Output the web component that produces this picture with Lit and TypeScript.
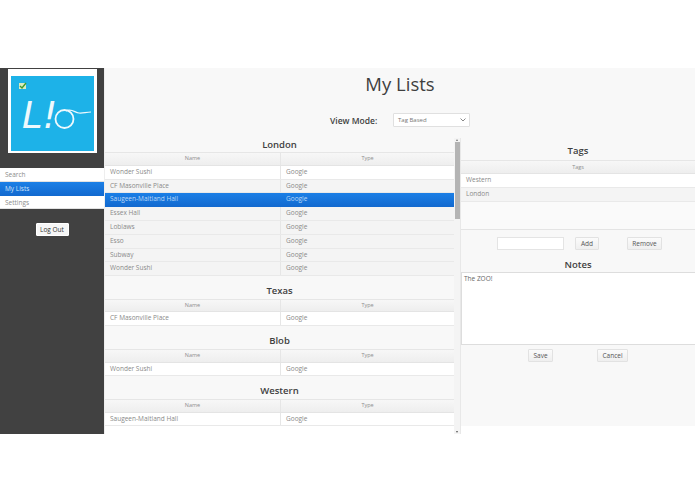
import { LitElement, html, css } from "lit";
import { customElement } from "lit/decorators.js";

type Row = { name: string; type: string; sel?: boolean };
const groups: { title: string; rows: Row[] }[] = [
  {
    title: "London",
    rows: [
      { name: "Wonder Sushi", type: "Google" },
      { name: "CF Masonville Place", type: "Google" },
      { name: "Saugeen-Maitland Hall", type: "Google", sel: true },
      { name: "Essex Hall", type: "Google" },
      { name: "Loblaws", type: "Google" },
      { name: "Esso", type: "Google" },
      { name: "Subway", type: "Google" },
      { name: "Wonder Sushi", type: "Google" },
    ],
  },
  { title: "Texas", rows: [{ name: "CF Masonville Place", type: "Google" }] },
  { title: "Blob", rows: [{ name: "Wonder Sushi", type: "Google" }] },
  { title: "Western", rows: [{ name: "Saugeen-Maitland Hall", type: "Google" }] },
];

@customElement("app-root")
export class AppRoot extends LitElement {
  static styles = css`
    :host {
      display: block;
      font-family: "Open Sans", "Noto Sans", sans-serif;
      color: #8a8a8a;
      background: #fff;
      padding-top: 68px;
      height: 494px;
      box-sizing: border-box;
      overflow: hidden;
    }
    .app {
      display: grid;
      grid-template-columns: 104px 1fr;
      height: 358px;
      background: #f8f8f8;
    }
    .side {
      background: #414141;
      display: flex;
      flex-direction: column;
      align-items: stretch;
    }
    .logo {
      display: block;
      width: 89px;
      height: 84px;
      margin: 1px 0 15px 8px;
    }
    .nav {
      background: #fff;
      font-size: 6.5px;
      display: flex;
      flex-direction: column;
    }
    .nav div {
      height: 13.8px;
      line-height: 13.4px;
      padding-left: 5px;
      border-bottom: 0.5px solid #e2e2e2;
      box-sizing: border-box;
      color: #8c8c8c;
    }
    .nav .on {
      background: linear-gradient(#1b7fe6, #1269cf);
      color: #cfe4fb;
      border-bottom: none;
    }
    .logout {
      align-self: center;
      margin-top: 14px;
    }
    .btn {
      height: 13px;
      display: flex;
      align-items: center;
      justify-content: center;
      box-sizing: border-box;
      background: linear-gradient(#fbfbfb, #efefef);
      border: 1px solid #e2e2e2;
      border-radius: 1px;
      font-size: 6.5px;
      color: #555;
    }
    .logout.btn {
      width: 33px;
      background: #f6f6f6;
      border-color: #fff;
      color: #333;
    }
    .main {
      min-width: 0;
      display: grid;
      grid-template-rows: 70px 1fr;
      border-left: 1px solid #eee;
    }
    .head {
      display: flex;
      flex-direction: column;
      align-items: center;
    }
    h1 {
      margin: 3px 0 0;
      font-size: 18.5px;
      line-height: 26px;
      font-weight: 400;
      color: #3f3f3f;
    }
    .mode {
      display: flex;
      align-items: center;
      margin-top: 16px;
      margin-left: 0;
      width: 140px;
      justify-content: space-between;
    }
    .mode label {
      font-size: 8.5px;
      font-weight: 600;
      color: #3f3f3f;
    }
    .select {
      width: 77px;
      height: 14px;
      box-sizing: border-box;
      border: 1px solid #e0e0e0;
      background: #fff;
      border-radius: 1px;
      font-size: 6px;
      color: #777;
      display: flex;
      align-items: center;
      justify-content: space-between;
      padding: 0 3px 0 4px;
    }
    .select svg {
      width: 6px;
      height: 4px;
    }
    .body {
      display: grid;
      grid-template-columns: 349px 6px 1fr;
      min-height: 0;
      overflow: hidden;
    }
    .list {
      overflow: hidden;
      min-height: 0;
    }
    .group-title {
      text-align: center;
      font-size: 9.5px;
      font-weight: 600;
      color: #3f3f3f;
      line-height: 14px;
    }
    .list .group {
      margin-bottom: 8px;
    }
    .list .group-title {
      height: 14px;
    }
    .list .group:first-child {
      padding-top: 0;
    }
    .list .group + .group .group-title {
      padding-top: 0;
      height: 14.5px;
    }
    .list .group:not(:first-child) {
      margin-top: 0;
    }
    .thead,
    .row {
      display: grid;
      grid-template-columns: 175px 1fr;
      height: 13.8px;
      box-sizing: border-box;
    }
    .thead {
      background: linear-gradient(#f7f7f7, #eeeeee);
      border-top: 1px solid #e6e6e6;
      border-bottom: 1px solid #e4e4e4;
      font-size: 5.5px;
      color: #8f8f8f;
      text-align: center;
      line-height: 11.5px;
    }
    .thead span + span,
    .row span + span {
      border-left: 1px solid #e6e6e6;
    }
    .row {
      background: #fff;
      border-bottom: 1px solid #e9e9e9;
      font-size: 6.5px;
      line-height: 12.8px;
      color: #8a8a8a;
    }
    .row:nth-child(odd) {
      background: #f4f4f4;
    }
    .row span {
      padding-left: 5px;
      white-space: nowrap;
    }
    .list .thead + .row {
      background: #fff;
    }
    .list .row.alt {
      background: #f4f4f4;
    }
    .list .row.sel {
      background: linear-gradient(#1b7fe6, #1269cf);
      color: #bcd9f8;
      border-bottom: none;
    }
    .row.sel span + span {
      border-left-color: transparent;
    }
    .bar {
      background: #f4f4f4;
      display: flex;
      flex-direction: column;
      align-items: center;
      justify-content: space-between;
      position: relative;
      padding: 1px 0;
      box-sizing: border-box;
    }
    .thumb {
      width: 5px;
      height: 77px;
      background: #b4b4b4;
      margin-top: 1px;
      margin-bottom: auto;
    }
    .arrow {
      width: 0;
      height: 0;
      border-left: 1.5px solid transparent;
      border-right: 1.5px solid transparent;
    }
    .arrow.up {
      border-bottom: 2px solid #777;
    }
    .arrow.down {
      border-top: 2px solid #555;
    }
    .right {
      display: flex;
      flex-direction: column;
      min-width: 0;
      border-left: 1px solid #e8e8e8;
      align-items: stretch;
    }
    .right .group-title {
      line-height: 13px;
      margin-top: 6px;
      height: 16px;
    }
    .tags-head {
      background: linear-gradient(#f7f7f7, #eeeeee);
      border-top: 1px solid #e6e6e6;
      border-bottom: 1px solid #e4e4e4;
      height: 14px;
      font-size: 5.5px;
      text-align: center;
      line-height: 12px;
      color: #8f8f8f;
      box-sizing: border-box;
    }
    .tag {
      height: 13.8px;
      box-sizing: border-box;
      font-size: 6.5px;
      line-height: 12.8px;
      padding-left: 5px;
      background: #fff;
      border-bottom: 1px solid #e9e9e9;
    }
    .tag.alt {
      background: #f4f4f4;
    }
    .tags-empty {
      height: 28px;
      background: #fafafa;
      border-bottom: 1px solid #e4e4e4;
      box-sizing: border-box;
    }
    .tag-form {
      display: flex;
      align-items: center;
      margin: 7px 0 0 36px;
      height: 14px;
    }
    .input {
      width: 67px;
      height: 13px;
      box-sizing: border-box;
      background: #fff;
      border: 1px solid #e4e4e4;
    }
    .add {
      width: 24px;
      margin-left: 11px;
    }
    .remove {
      width: 35px;
      margin-left: 28px;
    }
    .notes-title {
      text-align: center;
      font-size: 9.5px;
      font-weight: 600;
      color: #3f3f3f;
      line-height: 14px;
      margin-top: 7px;
      height: 14px;
    }
    .notes {
      height: 73px;
      box-sizing: border-box;
      background: #fff;
      border-top: 1px solid #ddd;
      border-left: 1px solid #ddd;
      border-bottom: 1px solid #ddd;
      font-size: 6.5px;
      color: #666;
      padding: 1px 2px;
      line-height: 9px;
    }
    .form-actions {
      display: flex;
      margin: 4px 0 0 67px;
    }
    .save {
      width: 25px;
    }
    .cancel {
      width: 31px;
      margin-left: 44px;
    }
  `;

  private logo() {
    const rings = [19, 35, 51, 68, 84];
    return html`<svg class="logo" viewBox="0 0 89 84" aria-hidden="true">
      <rect width="89" height="84" fill="#fff" />
      <rect x="3" y="7" width="83" height="75" fill="#1db2e8" />
      <g stroke="#4fc5ee" stroke-width="0.5">
        ${[18, 25, 32, 39, 46, 53, 60, 67, 74].map(
          (y) => html`<line x1="3" x2="86" y1=${y} y2=${y}></line>`
        )}
      </g>
      ${rings.map(
        (x) => html`<path
          d="M${x - 8} 7V3.5a1.2 1.2 0 0 1 2.4 0V7"
          fill="none"
          stroke="#b5a8a0"
          stroke-width="0.8"
        ></path>`
      )}
      <rect x="11" y="14" width="7" height="6" fill="#d8ecc0" />
      <path d="M12 17l2 2 4-5" fill="none" stroke="#3d9a2f" stroke-width="1.4" />
      <text
        x="14"
        y="59"
        font-family="'DejaVu Sans', sans-serif"
        font-style="italic"
        font-size="37"
        fill="#eef9fd"
        font-weight="300"
      >L!</text>
      <circle cx="56.500" cy="50" r="9" fill="none" stroke="#eef9fd" stroke-width="1.8" />
      <path
        d="M58 42c6-3 9 2 13 2 4 .5 7-1 12-1"
        fill="none"
        stroke="#eef9fd"
        stroke-width="1.2"
      />
    </svg>`;
  }

  private table(g: { title: string; rows: Row[] }) {
    return html`<div class="group">
      <div class="group-title">${g.title}</div>
      <div class="thead"><span>Name</span><span>Type</span></div>
      ${g.rows.map(
        (r, i) => html`<div class="row ${r.sel ? "sel" : i % 2 ? "alt" : ""}">
          <span>${r.name}</span><span>${r.type}</span>
        </div>`
      )}
    </div>`;
  }

  render() {
    return html`<div class="app">
      <aside class="side">
        ${this.logo()}
        <nav class="nav">
          <div>Search</div>
          <div class="on">My Lists</div>
          <div>Settings</div>
        </nav>
        <div class="btn logout">Log Out</div>
      </aside>
      <main class="main">
        <header class="head">
          <h1>My Lists</h1>
          <div class="mode">
            <label>View Mode:</label>
            <div class="select">
              <span>Tag Based</span>
              <svg viewBox="0 0 6 4"><path d="M.5 .5L3 3 5.500 .5" fill="none" stroke="#888" /></svg>
            </div>
          </div>
        </header>
        <div class="body">
          <section class="list">${groups.map((g) => this.table(g))}</section>
          <div class="bar">
            <div class="arrow up"></div>
            <div class="thumb"></div>
            <div class="arrow down"></div>
          </div>
          <section class="right">
            <div class="group-title">Tags</div>
            <div class="tags-head">Tags</div>
            <div class="tag">Western</div>
            <div class="tag alt">London</div>
            <div class="tags-empty"></div>
            <div class="tag-form">
              <div class="input"></div>
              <div class="btn add">Add</div>
              <div class="btn remove">Remove</div>
            </div>
            <div class="notes-title">Notes</div>
            <div class="notes">The ZOO!</div>
            <div class="form-actions">
              <div class="btn save">Save</div>
              <div class="btn cancel">Cancel</div>
            </div>
          </section>
        </div>
      </main>
    </div>`;
  }
}
